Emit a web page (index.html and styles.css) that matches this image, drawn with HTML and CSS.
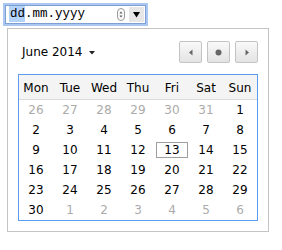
FILE: index.html
```html
<!DOCTYPE html>
<html>
<head>
<meta charset="utf-8">
<link rel="stylesheet" href="styles.css">
</head>
<body>
<div class="picker">
  <div class="input">
    <span class="text"><span class="sel">dd</span>.mm.yyyy</span>
    <span class="spin"><svg width="8" height="13" viewBox="0 0 8 13"><rect x="0.5" y="0.5" width="7" height="12" rx="3.5" fill="#fafafa" stroke="#9a9a9a"/><path d="M2.5 5.5 L4 3.5 L5.5 5.5 Z" fill="#555"/><path d="M2.5 7.5 L4 9.5 L5.5 7.5 Z" fill="#555"/></svg></span>
    <span class="drop"><svg width="7" height="7" viewBox="0 0 7 7"><path d="M0 1 L7 1 L3.5 6.5 Z" fill="#000"/></svg></span>
  </div>
  <div class="popup">
    <div class="head">
      <span class="month">June 2014<svg class="caret" width="6" height="4" viewBox="0 0 6 4"><path d="M0 0 L6 0 L3 3.5 Z" fill="#222"/></svg></span>
      <div class="nav">
        <button class="btn"><svg width="6" height="7" viewBox="0 0 6 7"><path d="M4.5 0.5 L1 3.5 L4.5 6.5 Z" fill="#666"/></svg></button>
        <button class="btn"><svg width="7" height="7" viewBox="0 0 7 7"><circle cx="3.5" cy="3.5" r="3" fill="#666"/></svg></button>
        <button class="btn"><svg width="6" height="7" viewBox="0 0 6 7"><path d="M1.5 0.5 L5 3.5 L1.5 6.5 Z" fill="#666"/></svg></button>
      </div>
    </div>
    <div class="cal">
      <div class="dh">Mon</div><div class="dh">Tue</div><div class="dh">Wed</div><div class="dh">Thu</div><div class="dh">Fri</div><div class="dh">Sat</div><div class="dh">Sun</div>
      <div class="d o">26</div><div class="d o">27</div><div class="d o">28</div><div class="d o">29</div><div class="d o">30</div><div class="d o">31</div><div class="d">1</div>
      <div class="d">2</div><div class="d">3</div><div class="d">4</div><div class="d">5</div><div class="d">6</div><div class="d">7</div><div class="d">8</div>
      <div class="d">9</div><div class="d">10</div><div class="d">11</div><div class="d">12</div><div class="d"><span class="today">13</span></div><div class="d">14</div><div class="d">15</div>
      <div class="d">16</div><div class="d">17</div><div class="d">18</div><div class="d">19</div><div class="d">20</div><div class="d">21</div><div class="d">22</div>
      <div class="d">23</div><div class="d">24</div><div class="d">25</div><div class="d">26</div><div class="d">27</div><div class="d">28</div><div class="d">29</div>
      <div class="d">30</div><div class="d o">1</div><div class="d o">2</div><div class="d o">3</div><div class="d o">4</div><div class="d o">5</div><div class="d o">6</div>
    </div>
  </div>
</div>
</body>
</html>
```
FILE: styles.css
```css
html, body {
  margin: 0;
  padding: 0;
  background: #fff;
}
body {
  font-family: "DejaVu Sans", sans-serif;
  font-size: 12px;
  color: #000;
}
.picker {
  display: flex;
  flex-direction: column;
  align-items: flex-start;
}
.input {
  margin: 5px 0 0 5px;
  width: 141px;
  height: 19px;
  box-sizing: border-box;
  border: 1px solid #7f9fd4;
  box-shadow: 0 0 0 2px #a9c7f1;
  display: flex;
  align-items: center;
  padding-left: 4px;
  padding-right: 1px;
  background: #fff;
}
.text {
  flex: 1;
  font-family: "Liberation Mono", monospace;
  font-size: 12.5px;
  line-height: 15px;
  color: #000;
}
.sel {
  background: #b4d3fb;
  padding: 1px 0 1px 1px;
  margin-left: -1px;
}
.spin {
  display: flex;
  margin-right: 4px;
}
.drop {
  width: 15px;
  height: 15px;
  background: #e6e6e6;
  display: flex;
  align-items: center;
  justify-content: center;
}
.popup {
  margin: 4px 0 0 7px;
  width: 262px;
  box-sizing: border-box;
  border: 1px solid #c4c4c4;
  padding: 12px 10px 10px 10px;
  background: #fff;
}
.head {
  height: 22px;
  margin-bottom: 11px;
  display: flex;
  align-items: center;
  justify-content: space-between;
}
.month {
  padding-left: 4px;
  display: flex;
  align-items: center;
  font-size: 12px;
  color: #000;
}
.caret {
  margin-left: 6px;
  margin-top: 1px;
}
.nav {
  display: flex;
  gap: 5px;
}
.btn {
  width: 23px;
  height: 22px;
  box-sizing: border-box;
  border: 1px solid #c3c3c3;
  border-radius: 2px;
  background: linear-gradient(#f9f9f9, #e3e3e3);
  padding: 0;
  margin: 0;
  display: flex;
  align-items: center;
  justify-content: center;
}
.cal {
  display: grid;
  grid-template-columns: repeat(7, 34px);
  grid-template-rows: 25px repeat(6, 20px);
  border: 1px solid #5b9cf2;
}
.dh {
  background: #f4f4f4;
  border-bottom: 1px solid #dcdcdc;
  display: flex;
  align-items: center;
  justify-content: center;
  font-size: 12px;
  color: #000;
  padding-top: 1px;
}
.d {
  display: flex;
  align-items: center;
  justify-content: center;
  font-size: 12px;
  color: #000;
}
.d.o {
  color: #ababab;
}
.today {
  width: 32px;
  height: 16px;
  box-sizing: border-box;
  border: 1px solid #9e9e9e;
  display: flex;
  align-items: center;
  justify-content: center;
}
```
